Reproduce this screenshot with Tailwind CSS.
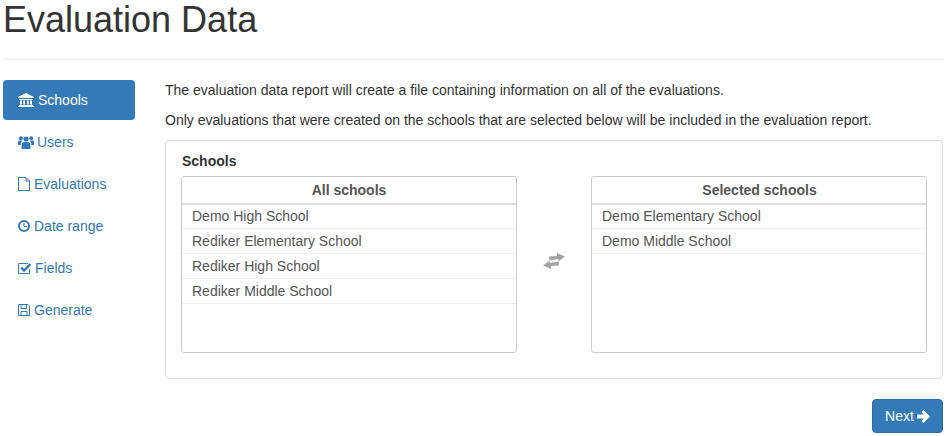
<!DOCTYPE html>
<html lang="en">
<head>
    <meta charset="UTF-8">
    <title>Evaluation Data</title>
    <script src="https://cdn.jsdelivr.net/npm/@tailwindcss/browser@4"></script>
</head>
<body class="bg-white text-[#333] text-[14px] leading-[20px] font-['Liberation_Sans',Arial,sans-serif] overflow-hidden">
    <div class="w-[948px] h-[436px] pl-[3px] pr-[5px]">
        <!-- Header -->
        <div class="h-[60px] border-b border-[#eee]">
            <h1 class="text-[36px] leading-[40px] font-normal">Evaluation Data</h1>
        </div>

        <div class="flex mt-[20px]">
            <!-- Sidebar -->
            <nav class="w-[132px] shrink-0 flex flex-col gap-[2px] text-[#337ab7]">
                <a class="h-[40px] rounded bg-[#337ab7] text-white flex items-center pl-[15px] gap-[4px]">
                    <svg class="w-[16px] h-[14px]" viewBox="0 0 16 14" fill="currentColor"><path d="M8 0 16 4V5H0V4ZM1 6H15V7H1ZM2 7.5H4V11.5H2ZM5.3 7.5H7V11.5H5.3ZM9 7.5H10.7V11.5H9ZM12 7.5H14V11.5H12ZM1 12H15V13H1ZM0 13H16V14H0Z"/></svg>
                    Schools
                </a>
                <a class="h-[40px] flex items-center pl-[15px] gap-[3px]">
                    <svg class="w-[16px] h-[14px]" viewBox="0 0 16 14" fill="currentColor"><circle cx="8" cy="4" r="2.6"/><circle cx="2.8" cy="3.2" r="2"/><circle cx="13.2" cy="3.2" r="2"/><path d="M3.6 14V9.5Q3.6 7 6 7H10Q12.4 7 12.4 9.5V14ZM0 10V7Q0 5.6 1.5 5.6H4.4Q3 6.6 2.8 8.2V10ZM16 10V7Q16 5.6 14.5 5.6H11.6Q13 6.6 13.2 8.2V10Z"/></svg>
                    Users
                </a>
                <a class="h-[40px] flex items-center pl-[15px] gap-[3px]">
                    <svg class="w-[13px] h-[14px]" viewBox="0 0 13 14" fill="none" stroke="currentColor"><path d="M.5 .5H8L11.5 4V13.5H.5ZM8 .5V4H11.5"/></svg>
                    Evaluations
                </a>
                <a class="h-[40px] flex items-center pl-[15px] gap-[3px]">
                    <svg class="w-[13px] h-[14px]" viewBox="0 0 13 14" fill="none" stroke="currentColor"><circle cx="6" cy="7" r="5" stroke-width="2"/><path d="M6 4V7.5H9"/></svg>
                    Date range
                </a>
                <a class="h-[40px] flex items-center pl-[15px] gap-[4px]">
                    <svg class="w-[13px] h-[14px] overflow-visible" viewBox="0 0 13 14" fill="none" stroke="currentColor"><path d="M11.5 8.5V12.5H.5V2.5H10"/><path d="M3 6.5 6 9.5 12.5 3" stroke-width="2.4"/></svg>
                    Fields
                </a>
                <a class="h-[40px] flex items-center pl-[15px] gap-[3px]">
                    <svg class="w-[13px] h-[14px]" viewBox="0 0 13 14" fill="none" stroke="currentColor"><path d="M.5 1.5H10L11.5 3V12.5H.5ZM3 1.5V5.5H8.5V1.5M3 12.5V8.5H9V12.5"/></svg>
                    Generate
                </a>
            </nav>

            <!-- Main -->
            <main class="ml-[30px] flex-1">
                <p class="mt-0">The evaluation data report will create a file containing information on all of the evaluations.</p>
                <p class="mt-[10px]">Only evaluations that were created on the schools that are selected below will be included in the evaluation report.</p>

                <section class="mt-[10px] h-[239px] border border-[#ddd] rounded px-[15px] pt-[10px]">
                    <div class="font-bold pl-[1px]">Schools</div>
                    <div class="flex justify-between mt-[5px]">
                        <div class="w-[336px] h-[177px] border border-[#ccc] rounded-[3px]">
                            <div class="h-[28px] border-b-2 border-[#ddd] text-center font-bold text-[#555] leading-[26px]">All schools</div>
                            <div class="h-[24px] pl-[10px] border-b border-[#eee] text-[#555] leading-[22px]">Demo High School</div>
                            <div class="h-[25px] pl-[10px] border-b border-[#eee] text-[#555] leading-[24px]">Rediker Elementary School</div>
                            <div class="h-[25px] pl-[10px] border-b border-[#eee] text-[#555] leading-[24px]">Rediker High School</div>
                            <div class="h-[25px] pl-[10px] border-b border-[#eee] text-[#555] leading-[24px]">Rediker Middle School</div>
                        </div>
                        <div class="flex-1 flex justify-center pt-[77px]">
                            <svg class="w-[22px] h-[16px]" viewBox="0 0 22 16" fill="#a3a3a3"><path d="M6 3.5 14 3V0L22 3.5 15.5 8.5V6L6.5 7.5ZM16 12.5 8 13V16L0 12.5 6.5 7.5V10L15.5 8.5Z"/></svg>
                        </div>
                        <div class="w-[336px] h-[177px] border border-[#ccc] rounded-[3px]">
                            <div class="h-[28px] border-b-2 border-[#ddd] text-center font-bold text-[#555] leading-[26px] pl-[1px]">Selected schools</div>
                            <div class="h-[24px] pl-[10px] border-b border-[#eee] text-[#555] leading-[22px]">Demo Elementary School</div>
                            <div class="h-[25px] pl-[10px] border-b border-[#eee] text-[#555] leading-[24px]">Demo Middle School</div>
                        </div>
                    </div>
                </section>

                <div class="flex justify-end mt-[20px]">
                    <button class="w-[71px] h-[34px] rounded bg-[#337ab7] border border-[#2e6da4] text-white flex items-center justify-center gap-[3px]">
                        Next
                        <svg class="w-[13px] h-[13px]" viewBox="0 0 13 13" fill="currentColor"><path d="M6.5 0 13 6.5 6.5 13 4.5 11 7 8.5H0V4.5H7L4.5 2Z"/></svg>
                    </button>
                </div>
            </main>
        </div>
    </div>
</body>
</html>
